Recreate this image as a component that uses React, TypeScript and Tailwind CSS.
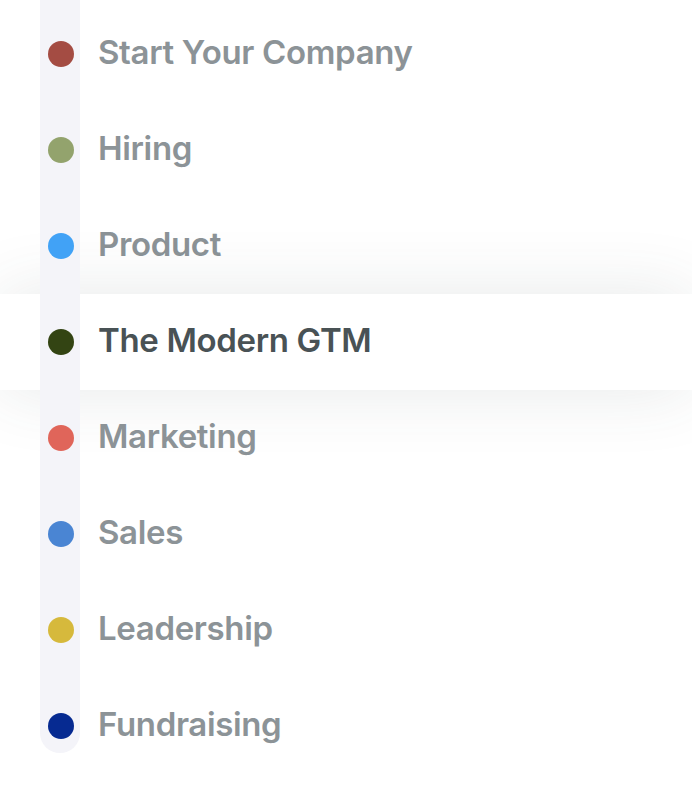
import React from 'react';

const ITEMS = [
  { label: 'Start Your Company', dot: 'bg-[#a44c43]' },
  { label: 'Hiring', dot: 'bg-[#93a36d]' },
  { label: 'Product', dot: 'bg-[#41a2f6]' },
  { label: 'The Modern GTM', dot: 'bg-[#334413]', active: true },
  { label: 'Marketing', dot: 'bg-[#e0655a]' },
  { label: 'Sales', dot: 'bg-[#4a85d3]' },
  { label: 'Leadership', dot: 'bg-[#d6b93c]' },
  { label: 'Fundraising', dot: 'bg-[#062a91]' },
];

export default function App() {
  return (
    <div className="relative w-[692px] h-[790px] bg-white overflow-hidden pt-[6px] font-['Inter',sans-serif]">
      {/* timeline track */}
      <div className="absolute left-10 top-0 w-10 h-[753px] rounded-b-[20px] bg-[#f4f4f9] z-10" />

      <ul className="flex flex-col">
        {ITEMS.map((item) => (
          <li
            key={item.label}
            className={
              item.active
                ? 'relative flex items-center h-24 bg-white shadow-[0_0_70px_rgba(60,70,70,0.12)]'
                : 'relative flex items-center h-24'
            }
          >
            <span className={`relative z-20 ml-12 w-[26px] h-[26px] rounded-full ${item.dot}`} />
            <span
              className={
                item.active
                  ? 'ml-6 -mt-[3px] text-[33px] font-semibold tracking-[-0.35px] text-[#495255]'
                  : 'ml-6 -mt-[3px] text-[33px] font-semibold tracking-[-0.35px] text-[#8c9397]'
              }
            >
              {item.label}
            </span>
          </li>
        ))}
      </ul>
    </div>
  );
}
